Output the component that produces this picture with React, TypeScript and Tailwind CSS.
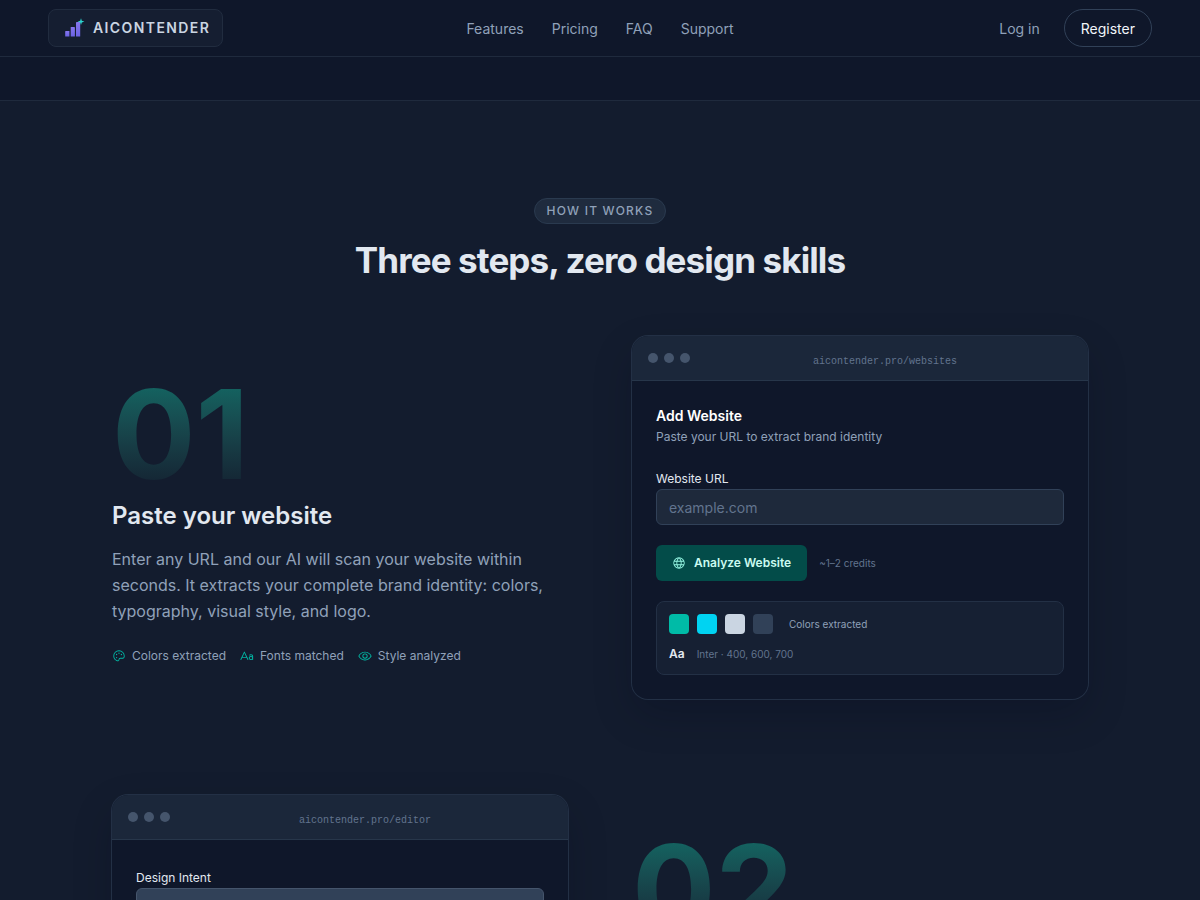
import React from 'react';
import { PiEye, PiGlobe, PiPalette, PiTextAa } from 'react-icons/pi';

const navLinks = ['Features', 'Pricing', 'FAQ', 'Support'];

const swatches = ['bg-[#00bba7]', 'bg-[#00d3f2]', 'bg-[#cad5e2]', 'bg-[#314158]'];

const chips = [
  { icon: PiPalette, label: 'Colors extracted' },
  { icon: PiTextAa, label: 'Fonts matched' },
  { icon: PiEye, label: 'Style analyzed' },
];

const Logo: React.FC = () => (
  <svg viewBox="0 0 20 20" className="w-5 h-5" aria-hidden="true">
    <defs>
      <linearGradient id="bars" x1="0" y1="0" x2="0" y2="1">
        <stop offset="0" stopColor="#8576ee" />
        <stop offset="1" stopColor="#6a62e4" />
      </linearGradient>
    </defs>
    <rect x="0.2" y="13" width="4.2" height="5.6" rx="0.4" fill="url(#bars)" />
    <rect x="5.7" y="9" width="4.2" height="9.6" rx="0.4" fill="url(#bars)" />
    <rect x="11" y="4" width="4.2" height="14.6" rx="0.4" fill="url(#bars)" />
    <path d="M16 0.2 L16.8 2.8 L19.4 3.6 L16.8 4.4 L16 7 L15.2 4.4 L12.6 3.6 L15.2 2.8 Z" fill="#2dd4cf" />
  </svg>
);

const BrowserCard: React.FC<{ url: string; children: React.ReactNode }> = ({ url, children }) => (
  <div className="rounded-2xl overflow-hidden bg-[#0f172a] ring-1 ring-[#233045] shadow-[0_16px_40px_rgba(2,6,23,0.2)]">
    <div className="flex items-start px-4 pt-[17px] h-[45px] bg-[#1b273a] border-b border-[#27364a]">
      <div className="flex gap-1.5">
        <span className="w-2.5 h-2.5 rounded-full bg-[#45556c]" />
        <span className="w-2.5 h-2.5 rounded-full bg-[#45556c]" />
        <span className="w-2.5 h-2.5 rounded-full bg-[#45556c]" />
      </div>
      <div className="flex-1 ml-2 text-center font-['Liberation_Mono',monospace] text-[10px] leading-[18px] text-[#62748e]">
        {url}
      </div>
    </div>
    <div className="p-6">{children}</div>
  </div>
);

const StepNumber: React.FC<{ value: string }> = ({ value }) => (
  <div className="w-fit text-[124px] leading-[128px] font-bold bg-linear-to-b from-[#14615f] from-15% to-[#142433] to-90% bg-clip-text text-transparent">
    {value}
  </div>
);

const App: React.FC = () => {
  return (
    <div className="min-h-screen bg-[#131c2e] font-[Inter,sans-serif] text-[#e2e8f0]">
      <header className="bg-[#0f172a] border-b border-[#1f2a3d]">
        <div className="grid grid-cols-[1fr_auto_1fr] items-center h-14 px-12">
          <a href="#" className="justify-self-start flex items-center gap-2 h-[38px] pl-4 pr-3 rounded-lg border border-[#212c3f] bg-[#151e31]">
            <Logo />
            <span className="text-sm font-semibold tracking-widest text-[#cad5e2]">AICONTENDER</span>
          </a>
          <nav className="flex gap-7 pt-0.5 text-sm text-[#90a1b9]">
            {navLinks.map((link) => (
              <a key={link} href={`#${link.toLowerCase()}`}>{link}</a>
            ))}
          </nav>
          <div className="justify-self-end flex items-center gap-6 text-sm">
            <a href="#login" className="pt-0.5 text-[#90a1b9]">Log in</a>
            <a href="#register" className="flex items-center h-[38px] pt-0.5 px-4 rounded-full border border-[#314158] text-[#f1f5f9]">Register</a>
          </div>
        </div>
      </header>

      <div className="h-11 bg-[#0f172a] border-b border-[#1f2a3d]" />

      <section id="features" className="max-w-6xl mx-auto px-[88px] pt-24 pb-24">
        <div className="text-center">
          <span className="inline-flex items-center h-[26px] px-3 rounded-full border border-[#2a3a4f] bg-[#1f2b3e] text-xs font-medium tracking-widest text-[#90a1b9]">
            HOW IT WORKS
          </span>
          <h2 className="mt-3.5 text-[35px] leading-[44px] font-bold tracking-tight">
            Three steps, zero design skills
          </h2>
        </div>

        <div className="mt-[54px] grid grid-cols-2 gap-16 items-center">
          <div>
            <StepNumber value="01" />
            <h3 className="mt-0.5 text-2xl leading-8 font-semibold">Paste your website</h3>
            <p className="mt-3.5 text-base leading-[26px] text-[#90a1b9]">
              Enter any URL and our AI will scan your website within seconds. It extracts your complete brand identity: colors, typography, visual style, and logo.
            </p>
            <ul className="mt-[22px] flex gap-3.5 text-xs leading-5 text-[#90a1b9]">
              {chips.map(({ icon: Icon, label }) => (
                <li key={label} className="flex items-center gap-1.5">
                  <Icon className="w-3.5 h-3.5 text-[#00bba7]" />
                  {label}
                </li>
              ))}
            </ul>
          </div>

          <BrowserCard url="aicontender.pro/websites">
            <h4 className="text-sm leading-[22px] font-semibold text-white">Add Website</h4>
            <p className="text-xs leading-5 text-[#90a1b9]">Paste your URL to extract brand identity</p>
            <label htmlFor="url" className="block mt-[22px] text-xs leading-5">Website URL</label>
            <input
              id="url"
              type="text"
              placeholder="example.com"
              className="block w-full h-9 px-3 rounded-md border border-[#314158] bg-[#1e293b] text-sm placeholder:text-[#62748e]"
            />
            <div className="mt-5 flex items-center gap-3">
              <button className="flex items-center gap-2 h-9 px-4 rounded-md bg-[#034c49] text-xs font-semibold text-[#cbfbf1]">
                <PiGlobe className="w-3.5 h-3.5 text-[#96f7e4]" />
                Analyze Website
              </button>
              <span className="text-[10px] text-[#62748e]">~1–2 credits</span>
            </div>
            <div className="mt-5 px-3 pt-3 pb-[10px] rounded-lg border border-[#233045] bg-[#162033]">
              <div className="flex items-center gap-2">
                {swatches.map((swatch) => (
                  <span key={swatch} className={`w-5 h-5 rounded ${swatch}`} />
                ))}
                <span className="ml-2 text-[10px] text-[#90a1b9]">Colors extracted</span>
              </div>
              <div className="mt-[10px] flex items-center gap-3">
                <span className="text-xs leading-5 font-semibold">Aa</span>
                <span className="text-[10px] text-[#62748e]">Inter · 400, 600, 700</span>
              </div>
            </div>
          </BrowserCard>
        </div>

        <div className="mt-24 grid grid-cols-2 gap-16 items-start">
          <BrowserCard url="aicontender.pro/editor">
            <label htmlFor="intent" className="block mt-1 text-xs leading-5">Design Intent</label>
            <textarea
              id="intent"
              className="block w-full h-24 rounded-md border border-[#45556c] bg-[#314158]"
            />
          </BrowserCard>
          <div className="pt-[30px]">
            <StepNumber value="02" />
          </div>
        </div>
      </section>
    </div>
  );
};

export default App;
